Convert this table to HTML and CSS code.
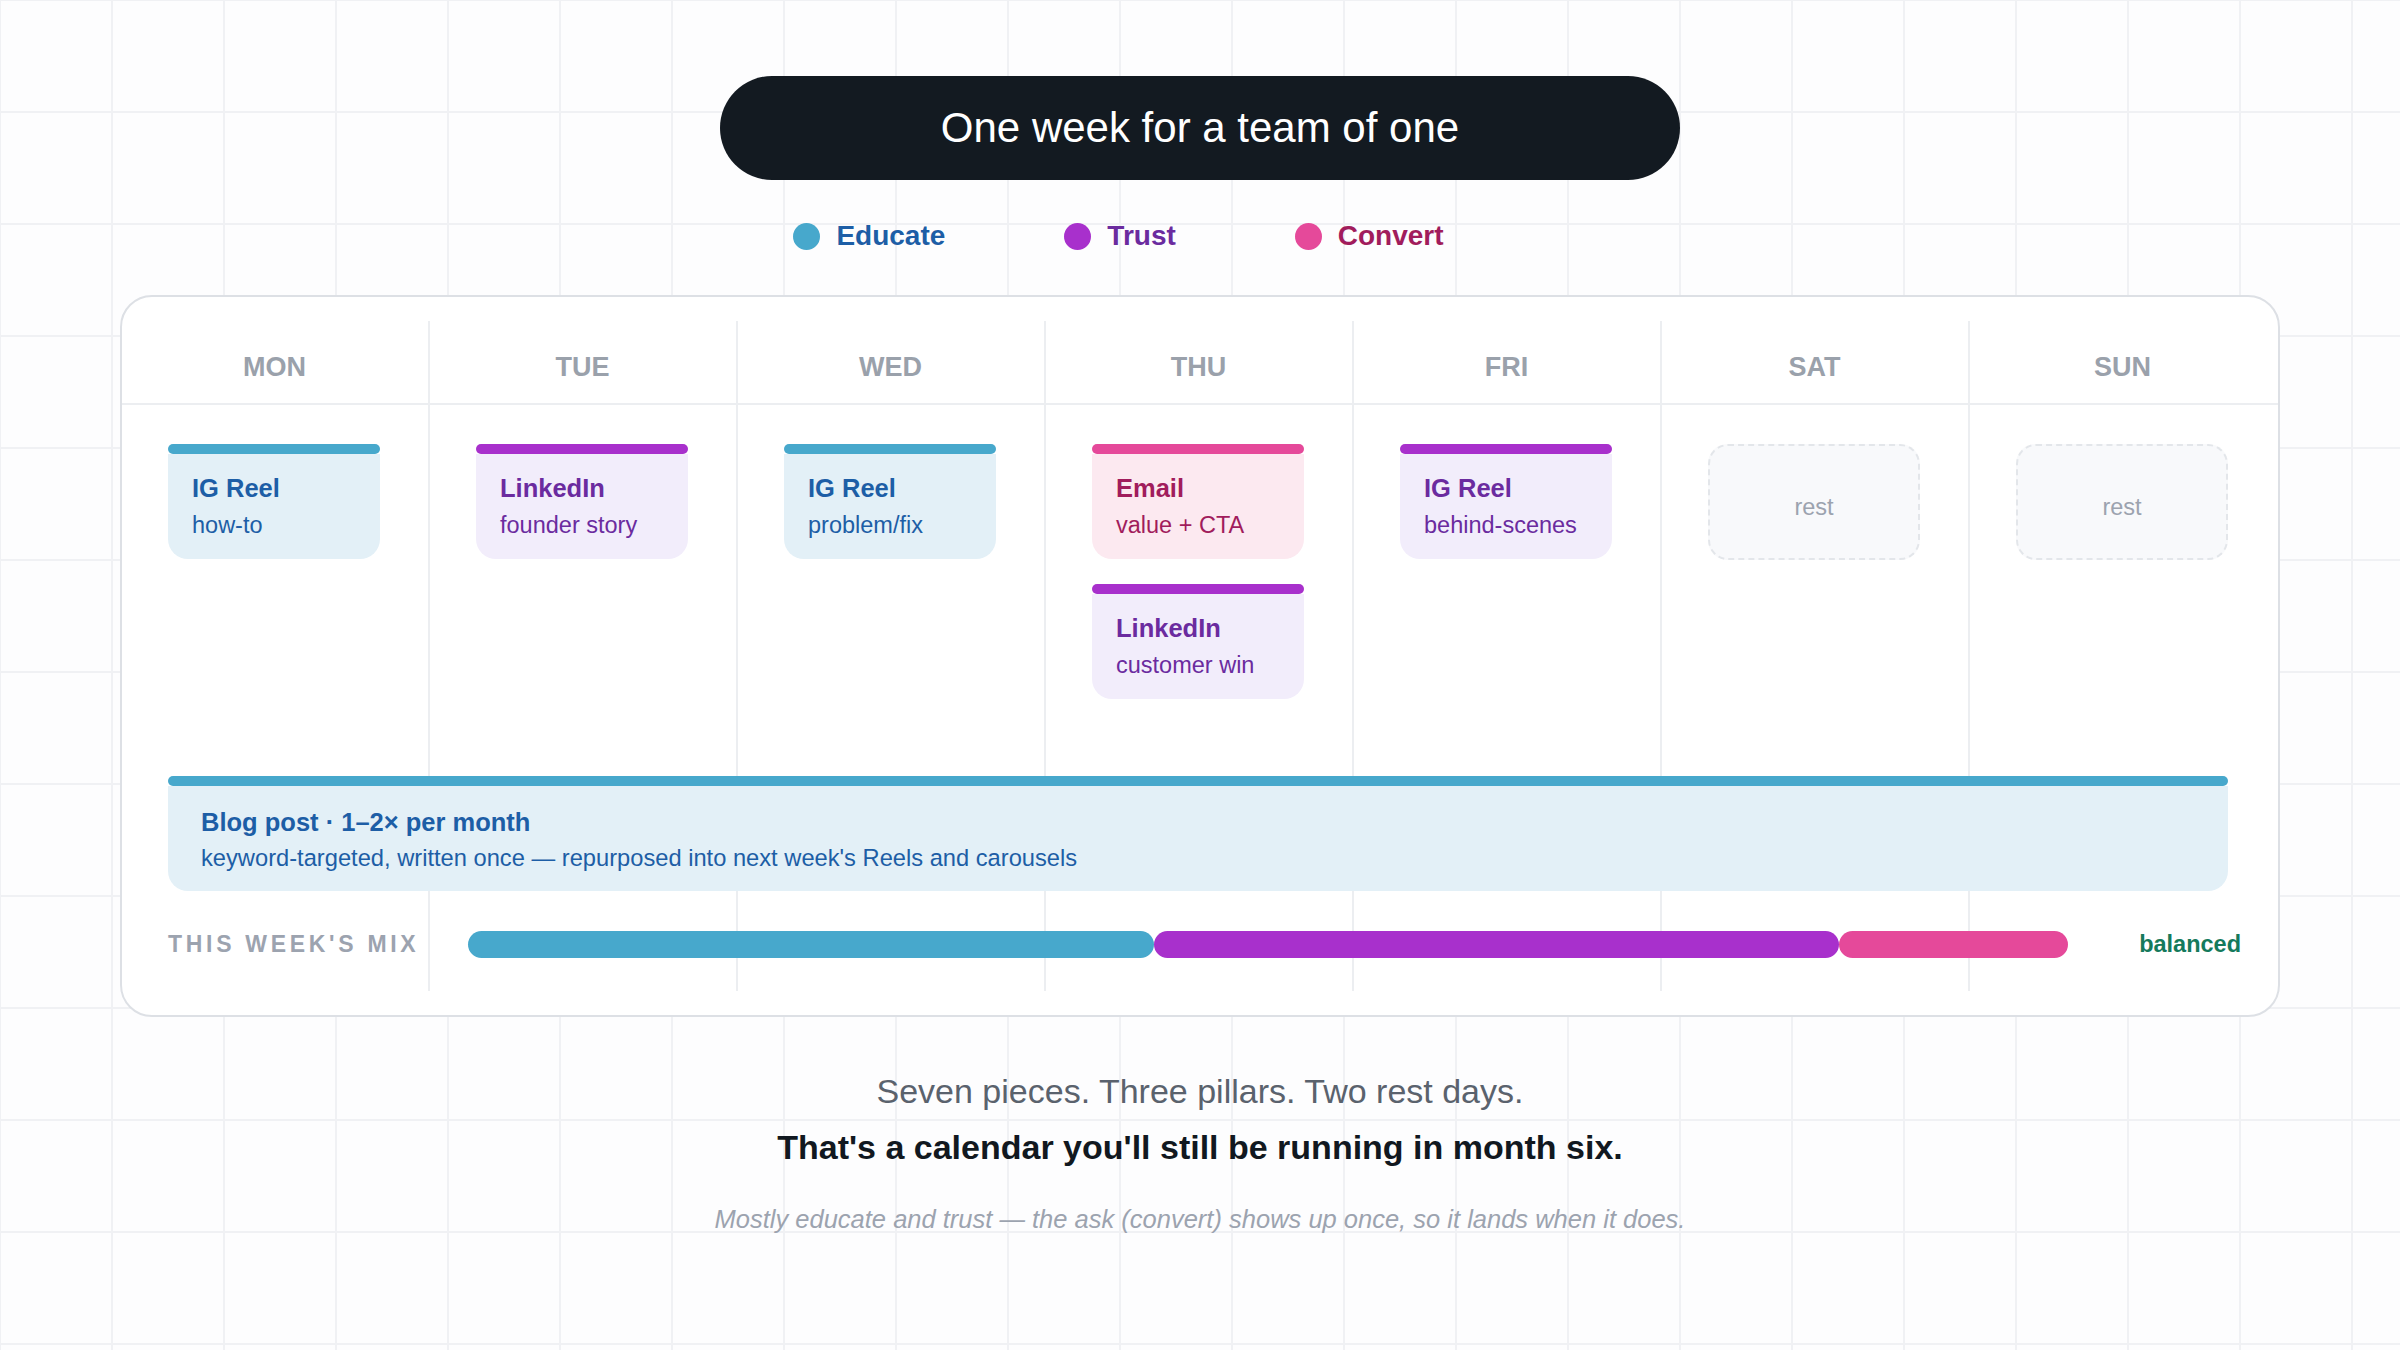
FILE: index.html
```html
<!DOCTYPE html>
<html lang="en">
<head>
<meta charset="utf-8">
<title>One week for a team of one</title>
<link rel="stylesheet" href="styles.css">
</head>
<body>
<main class="page">
  <h1 class="title">One week for a team of one</h1>

  <div class="legend">
    <div class="legend-item edu"><span class="dot"></span><span class="legend-label">Educate</span></div>
    <div class="legend-item tru"><span class="dot"></span><span class="legend-label">Trust</span></div>
    <div class="legend-item con"><span class="dot"></span><span class="legend-label">Convert</span></div>
  </div>

  <section class="card">
    <div class="week">
      <div class="day">MON</div>
      <div class="day">TUE</div>
      <div class="day">WED</div>
      <div class="day">THU</div>
      <div class="day">FRI</div>
      <div class="day">SAT</div>
      <div class="day">SUN</div>

      <div class="cell">
        <div class="ev edu"><div class="ev-body"><div class="ev-title">IG Reel</div><div class="ev-sub">how-to</div></div></div>
      </div>
      <div class="cell">
        <div class="ev tru"><div class="ev-body"><div class="ev-title">LinkedIn</div><div class="ev-sub">founder story</div></div></div>
      </div>
      <div class="cell">
        <div class="ev edu"><div class="ev-body"><div class="ev-title">IG Reel</div><div class="ev-sub">problem/fix</div></div></div>
      </div>
      <div class="cell">
        <div class="ev con"><div class="ev-body"><div class="ev-title">Email</div><div class="ev-sub">value + CTA</div></div></div>
        <div class="ev tru"><div class="ev-body"><div class="ev-title">LinkedIn</div><div class="ev-sub">customer win</div></div></div>
      </div>
      <div class="cell">
        <div class="ev tru"><div class="ev-body"><div class="ev-title">IG Reel</div><div class="ev-sub">behind-scenes</div></div></div>
      </div>
      <div class="cell">
        <div class="rest">rest</div>
      </div>
      <div class="cell">
        <div class="rest">rest</div>
      </div>

      <div class="blog ev edu">
        <div class="ev-body blog-body">
          <div class="ev-title">Blog post · 1–2× per month</div>
          <div class="ev-sub">keyword-targeted, written once — repurposed into next week's Reels and carousels</div>
        </div>
      </div>

      <div class="mix">
        <div class="mix-label">THIS WEEK'S MIX</div>
        <div class="mix-bar">
          <span class="seg seg-edu" style="flex-grow: 3"></span>
          <span class="seg seg-tru" style="flex-grow: 3"></span>
          <span class="seg seg-con" style="flex-grow: 1"></span>
        </div>
        <div class="mix-status">balanced</div>
      </div>
    </div>
  </section>

  <p class="sum-1">Seven pieces. Three pillars. Two rest days.</p>
  <p class="sum-2">That's a calendar you'll still be running in month six.</p>
  <p class="sum-3">Mostly educate and trust — the ask (convert) shows up once, so it lands when it does.</p>
</main>
</body>
</html>
```

FILE: styles.css
```css
* { box-sizing: border-box; }

html, body {
  margin: 0;
  padding: 0;
}

body {
  min-height: 1350px;
  font-family: "Liberation Sans", Arial, sans-serif;
  background-color: #fdfdfe;
  background-image:
    linear-gradient(to right, #f0f1f4 2px, transparent 2px),
    linear-gradient(to bottom, #f0f1f4 2px, transparent 2px);
  background-size: 112px 112px;
  background-position: 111px 111px;
}

.page {
  padding-top: 76px;
}

/* Title pill */
.title {
  width: 960px;
  height: 104px;
  margin: 0 auto;
  border-radius: 52px;
  background: #131a21;
  color: #ffffff;
  font-size: 42px;
  font-weight: 400;
  display: flex;
  align-items: center;
  justify-content: center;
}

/* Legend */
.legend {
  display: flex;
  justify-content: center;
  gap: 119px;
  margin-top: 36px;
  padding-right: 163px;
  height: 40px;
  align-items: center;
}

.legend-item {
  display: flex;
  align-items: center;
  gap: 16px;
  font-size: 28px;
  font-weight: 700;
  line-height: 40px;
}

.dot {
  width: 27px;
  height: 27px;
  border-radius: 50%;
}

.legend-item.edu .dot { background: #47a8cc; }
.legend-item.tru .dot { background: #a830cc; }
.legend-item.con .dot { background: #e5499a; }
.legend-item.edu .legend-label { color: #1d5ea6; }
.legend-item.tru .legend-label { color: #6b2b9f; }
.legend-item.con .legend-label { color: #a11c5c; }

/* Card */
.card {
  width: 2160px;
  margin: 39px auto 0;
  background: #ffffff;
  border: 2px solid #dde0e5;
  border-radius: 32px;
  padding: 24px 0;
}

.week {
  display: grid;
  grid-template-columns: repeat(7, 1fr);
  background-image: repeating-linear-gradient(90deg,
      transparent 0, transparent calc(100% / 6 - 2px),
      #eceef1 calc(100% / 6 - 2px), #eceef1 calc(100% / 6));
  background-repeat: no-repeat;
  background-size: calc(100% * 6 / 7) 100%;
}

.day {
  padding: 30px 3px 20px 0;
  line-height: 32px;
  font-size: 27px;
  font-weight: 700;
  color: #9aa1ab;
  text-align: center;
  border-bottom: 2px solid #eceef1;
}

.cell {
  padding: 39px 0 0 46px;
  display: flex;
  flex-direction: column;
  gap: 25px;
}

/* Event cards */
.ev {
  width: 212px;
}

.ev::before {
  content: "";
  display: block;
  height: 10px;
  border-radius: 5px;
  background: var(--bar);
}

.ev-body {
  background: var(--bg);
  color: var(--ink);
  border-radius: 0 0 20px 20px;
  padding: 18px 24px 18px;
}

.ev-title {
  font-size: 25.5px;
  font-weight: 700;
  line-height: 32px;
}

.ev-sub {
  font-size: 23.5px;
  line-height: 32px;
  margin-top: 5px;
}

.edu { --bar: #47a8cc; --bg: #e3f0f7; --ink: #1d5ea6; }
.tru { --bar: #a830cc; --bg: #f2edfb; --ink: #6b2b9f; }
.con { --bar: #e5499a; --bg: #fce9f0; --ink: #a11c5c; }

.rest {
  width: 212px;
  height: 116px;
  border: 2px dashed #e3e6ea;
  border-radius: 20px;
  background: #f8f9fb;
  color: #9ca3af;
  font-size: 23.5px;
  padding-top: 10px;
  display: flex;
  align-items: center;
  justify-content: center;
}

/* Blog */
.blog {
  grid-column: 1 / -1;
  width: auto;
  margin: 77px 50px 0 46px;
}

.blog-body {
  padding: 20px 33px 17px;
}

.blog-body .ev-title {
  font-size: 25.5px;
}

.blog-body .ev-sub {
  margin-top: 4px;
  font-size: 23.7px;
}

/* Mix */
.mix {
  grid-column: 1 / -1;
  height: 100px;
  display: flex;
  align-items: center;
  padding: 6px 37px 0 46px;
}

.mix-label {
  flex: 0 0 300px;
  font-size: 23px;
  font-weight: 700;
  letter-spacing: 3.7px;
  color: #9ca3af;
}

.mix-bar {
  flex: 0 0 1600px;
  display: flex;
  height: 27px;
}

.seg {
  flex-basis: 0;
  height: 27px;
  border-radius: 14px;
}

.seg-edu { background: #47a8cc; }
.seg-tru { background: #a830cc; }
.seg-con { background: #e5499a; }

.mix-status {
  margin-left: auto;
  font-size: 23.5px;
  font-weight: 700;
  color: #157a5c;
}

/* Summary */
.sum-1,
.sum-2 {
  margin: 0;
  text-align: center;
  font-size: 34px;
  line-height: 40px;
}

.sum-1 {
  margin-top: 54px;
  color: #5a626d;
}

.sum-2 {
  margin-top: 16px;
  font-weight: 700;
  color: #111820;
}

.sum-3 {
  margin: 35px 0 0;
  text-align: center;
  font-size: 25.5px;
  line-height: 34px;
  font-style: italic;
  color: #9ca3af;
}
```
